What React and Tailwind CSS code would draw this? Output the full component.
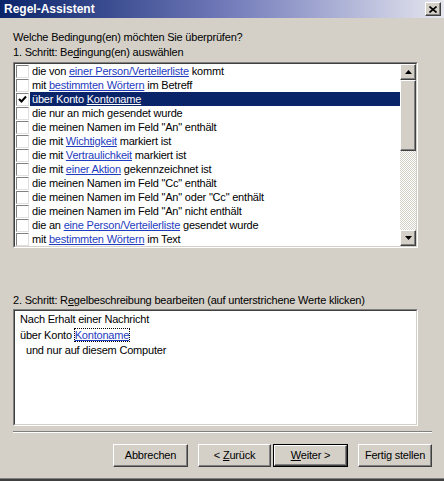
import React from "react";

const rows = [
  ["die von ", "einer Person/Verteilerliste", " kommt"],
  ["mit ", "bestimmten Wörtern", " im Betreff"],
  ["über Konto ", "Kontoname", ""],
  ["die nur an mich gesendet wurde"],
  ['die meinen Namen im Feld "An" enthält'],
  ["die mit ", "Wichtigkeit", " markiert ist"],
  ["die mit ", "Vertraulichkeit", " markiert ist"],
  ["die mit ", "einer Aktion", " gekennzeichnet ist"],
  ['die meinen Namen im Feld "Cc" enthält'],
  ['die meinen Namen im Feld "An" oder "Cc" enthält'],
  ['die meinen Namen im Feld "An" nicht enthält'],
  ["die an ", "eine Person/Verteilerliste", " gesendet wurde"],
  ["mit ", "bestimmten Wörtern", " im Text"],
];

const raised =
  "bg-[#d4d0c8] border-t border-l border-t-white border-l-white border-b border-r border-b-[#404040] border-r-[#404040] shadow-[inset_-1px_-1px_#808080]";

function Arrow({ down }) {
  return (
    <svg width="7" height="4" viewBox="0 0 7 4">
      <path d={down ? "M0 0H7L3.5 4Z" : "M0 4H7L3.5 0Z"} fill="#000" />
    </svg>
  );
}

function Row({ parts, selected }) {
  const [a, link, b] = parts;
  return (
    <div className="flex h-[14px] items-center">
      <div className="ml-[1px] w-[13px] h-[13px] bg-white border border-t-[#808080] border-l-[#808080] border-b-[#e0e0e0] border-r-[#e0e0e0] flex items-center justify-center">
        {selected && (
          <svg width="9" height="8" viewBox="0 0 9 8">
            <path d="M1 4L3.5 6.5L8 1.5" stroke="#000" strokeWidth="2" fill="none" />
          </svg>
        )}
      </div>
      <div className={`ml-[1px] flex-1 h-[14px] pl-[2px] leading-[14px] whitespace-nowrap ${selected ? "bg-[#0a246a] text-white" : "text-black"}`}>
        {a}
        {link && <span className={`underline ${selected ? "text-white" : "text-[#1e3cc0]"}`}>{link}</span>}
        {b}
      </div>
    </div>
  );
}

function Button({ children, isDefault, className }) {
  const inner = (
    <div className={`${raised} h-full w-full flex items-center justify-center text-black`}>{children}</div>
  );
  return (
    <div className={`h-[23px] ${isDefault ? "border border-black" : ""} ${className}`}>{inner}</div>
  );
}

export default function App() {
  return (
    <div
      className="w-[444px] h-[481px] bg-[#d4d0c8] flex flex-col text-[11px] tracking-[-0.2px] border-b-[2px] border-[#404040]"
      style={{ fontFamily: '"Liberation Sans", Arial, sans-serif' }}
    >
      <div className="h-[18px] flex items-center justify-between pl-[4px] pr-[3px] bg-gradient-to-r from-[#0a246a] via-[#7078b8] to-[#e6e6ee]">
        <span className="text-white font-bold text-[12px] tracking-normal">Regel-Assistent</span>
        <div className={`${raised} w-[16px] h-[14px] flex items-center justify-center`}>
          <svg width="8" height="7" viewBox="0 0 8 7">
            <path d="M0.5 0.5L7.5 6.5M7.5 0.5L0.5 6.5" stroke="#000" strokeWidth="1.6" />
          </svg>
        </div>
      </div>

      <div className="flex-1 flex flex-col px-[13px] pt-[12px] border-b border-[#808080]">
        <div className="leading-[14px] h-[14px]">Welche Bedingung(en) möchten Sie überprüfen?</div>
        <div className="leading-[14px] h-[14px] mt-[1px]">
          1. Schritt: Be<span className="underline">d</span>ingung(en) auswählen
        </div>

        <div className="mt-[3px] w-[405px] h-[186px] border border-t-[#808080] border-l-[#808080] border-b-white border-r-white">
          <div className="h-full border border-t-[#404040] border-l-[#404040] border-b-[#d4d0c8] border-r-[#d4d0c8] bg-white flex">
            <div className="flex-1 flex flex-col">
              {rows.map((r, i) => (
                <Row key={i} parts={r} selected={i === 2} />
              ))}
            </div>
            <div className="w-[16px] flex flex-col">
              <div className={`${raised} h-[16px] flex items-center justify-center`}>
                <Arrow />
              </div>
              <div className={`${raised} h-[71px]`} />
              <div className="flex-1 bg-[image:repeating-conic-gradient(#d4d0c8_0%_25%,#ffffff_0%_50%)] bg-[length:2px_2px]" />
              <div className={`${raised} h-[16px] flex items-center justify-center`}>
                <Arrow down />
              </div>
            </div>
          </div>
        </div>

        <div className="mt-[45px] leading-[14px] h-[14px]">
          2. Schritt: R<span className="underline">e</span>gelbeschreibung bearbeiten (auf unterstrichene Werte klicken)
        </div>
        <div className="mt-[2px] w-[405px] h-[117px] border border-t-[#808080] border-l-[#808080] border-b-white border-r-white">
          <div className="h-full border border-t-[#404040] border-l-[#404040] border-b-[#d4d0c8] border-r-[#d4d0c8] bg-white pl-[5px] pt-[1px] leading-[15.5px]">
            <div>Nach Erhalt einer Nachricht</div>
            <div>
              über Konto{" "}
              <span className="outline-1 outline-dotted outline-black text-[#1e3cc0] underline">Kontoname</span>
            </div>
            <div className="pl-[6px]">und nur auf diesem Computer</div>
          </div>
        </div>

        <div className="mt-[5px] w-[419px] h-[2px] border-t border-t-[#808080] border-b border-b-white" />

        <div className="mt-[11px] w-[419px] flex justify-end">
          <Button className="w-[75px]">Abbrechen</Button>
          <Button className="w-[73px] ml-[10px]">
            &lt; <span className="underline ml-[3px]">Z</span>urück
          </Button>
          <Button isDefault className="w-[75px] ml-[2px]">
            <span className="underline">W</span>eiter &gt;
          </Button>
          <Button className="w-[74px] ml-[10px]">Fertig stellen</Button>
        </div>
      </div>
    </div>
  );
}
